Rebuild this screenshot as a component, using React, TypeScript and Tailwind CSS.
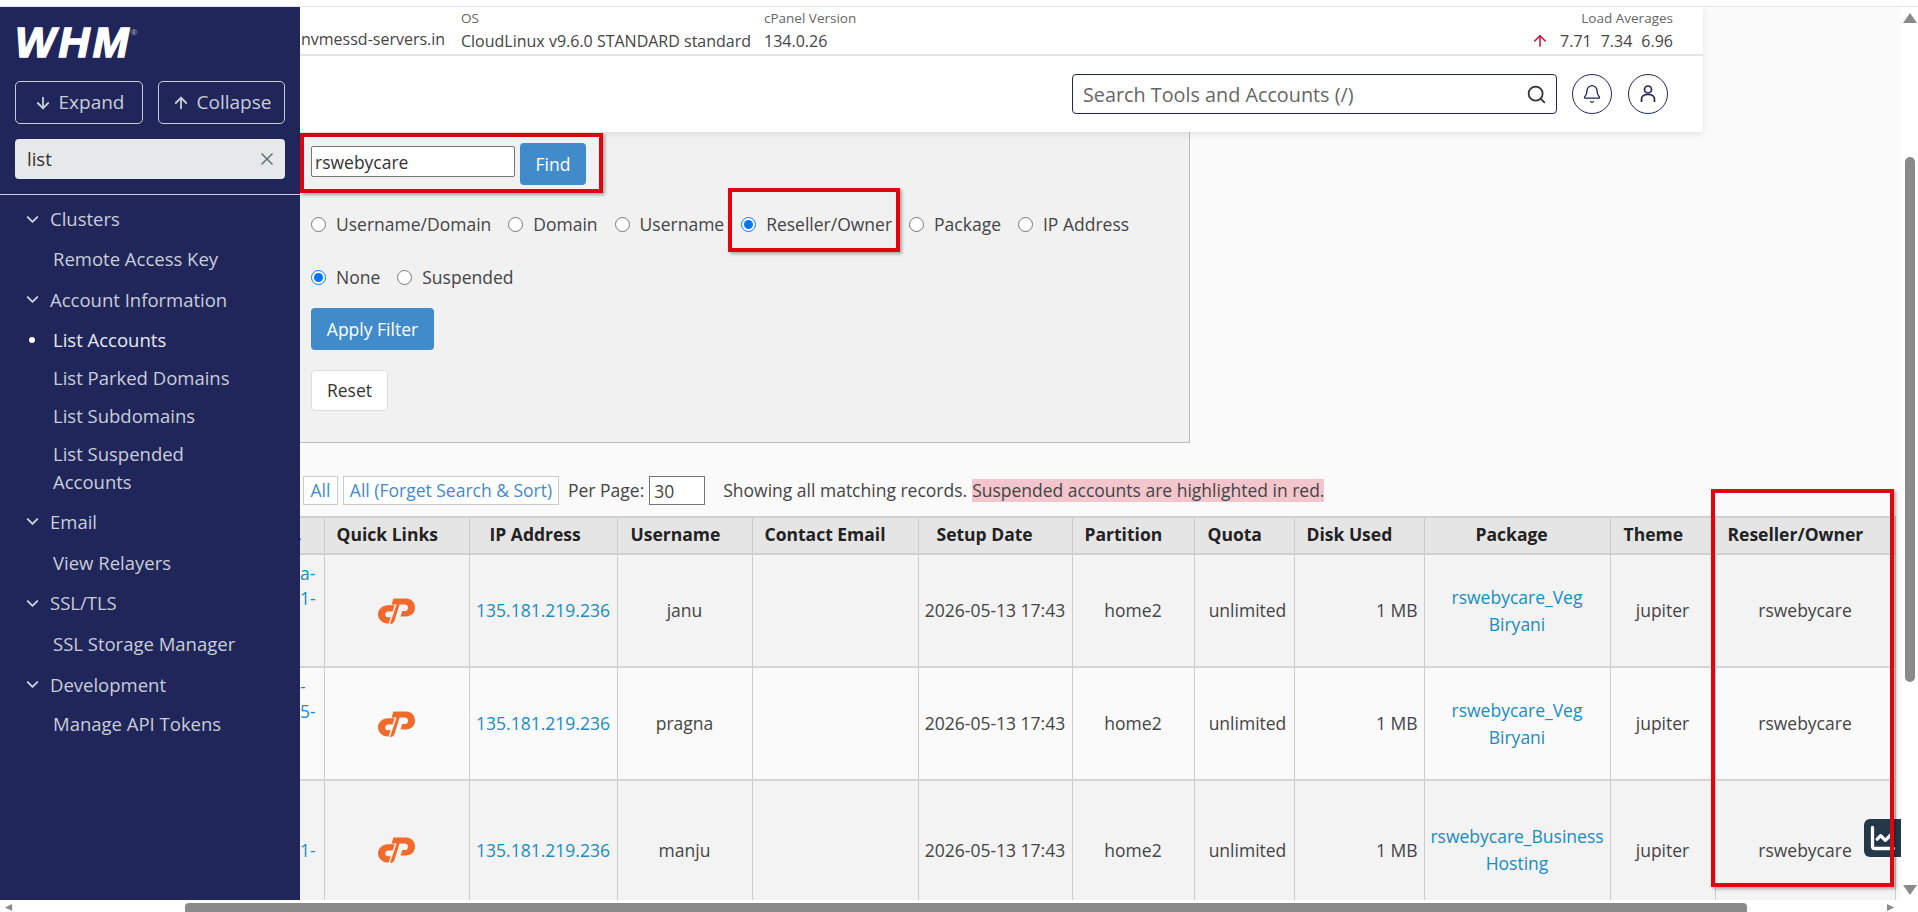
import { ArrowDown, ArrowUp, Bell, ChartLine, ChevronDown, Search, X } from "lucide-react";

/* ---------------- Data ---------------- */

const navItems = [
    { label: "Clusters", group: true, h: "h-[40px]" },
    { label: "Remote Access Key", h: "h-[40px]" },
    { label: "Account Information", group: true, h: "h-[41px]" },
    { label: "List Accounts", active: true, h: "h-[39px]" },
    { label: "List Parked Domains", h: "h-[38px]" },
    { label: "List Subdomains", h: "h-[38px]" },
    { label: "List Suspended Accounts", h: "h-[66px]" },
    { label: "Email", group: true, h: "h-[41px]" },
    { label: "View Relayers", h: "h-[41px]" },
    { label: "SSL/TLS", group: true, h: "h-[40px]" },
    { label: "SSL Storage Manager", h: "h-[41px]" },
    { label: "Development", group: true, h: "h-[41px]" },
    { label: "Manage API Tokens", h: "h-[38px]" },
];

const columnWidths = [24, 145, 148, 135, 166, 154, 122, 100, 130, 186, 105, 180];

const rows = [
    { lead: ["a-", "1-", "", ""], user: "janu", pkg: ["rswebycare_Veg", "Biryani"], rowH: "h-[113px]", bg: "bg-[#f3f3f3]" },
    { lead: ["-", "5-", "", ""], user: "pragna", pkg: ["rswebycare_Veg", "Biryani"], rowH: "h-[113px]", bg: "bg-[#fafafa]" },
    { lead: ["1-"], user: "manju", pkg: ["rswebycare_Business", "Hosting"], rowH: "h-[140px]", bg: "bg-[#f3f3f3]" },
];

const headers = [
    { label: "Quick Links", pad: "pl-[12px]" },
    { label: "IP Address", pad: "pl-[20px]" },
    { label: "Username", pad: "pl-[13px]" },
    { label: "Contact Email", pad: "pl-[12px]" },
    { label: "Setup Date", pad: "pl-[18px]" },
    { label: "Partition", pad: "pl-[12px]" },
    { label: "Quota", pad: "pl-[13px]" },
    { label: "Disk Used", pad: "pl-[12px]" },
    { label: "Package", pad: "pl-[51px]" },
    { label: "Theme", pad: "pl-[13px]" },
    { label: "Reseller/Owner", pad: "pl-[12px]" },
];

const radios = [
    { label: "Username/Domain", gap: "mr-[17px]" },
    { label: "Domain", gap: "mr-[17px]" },
    { label: "Username", gap: "mr-[17px]" },
    { label: "Reseller/Owner", checked: true, gap: "mr-[17px]" },
    { label: "Package", gap: "mr-[17px]" },
    { label: "IP Address", gap: "" },
];

/* ---------------- Small drawings ---------------- */

function CpanelLogo() {
    return (
        <svg viewBox="0 0 37 26" className="mx-auto h-[26px] w-[37px]" fill="#f26a2b">
            <path d="M16.6 7.2H10C4.3 7.2 0 11.2 0 16.3C0 21.3 4.2 25.4 9.6 25.4H10.6L12.8 19.2H10.2C8.4 19.2 7.2 18 7.2 16.4C7.2 14.8 8.4 13.4 10.3 13.4H14.6Z" />
            <path d="M15.5 0.5H28C33.5 0.5 37 4.5 37 9.5C37 14.8 33 18.5 28 18.5H22.5L24.3 13H27.5C29 13 30 11.4 30 9.8C30 8 28.8 6.5 27 6.5H21.6L16.6 22.5C16 24.8 14.6 26 12.4 26H12L18.6 6.5H13.5Z" />
        </svg>
    );
}

function Triangle({ points, className }: { points: string; className: string }) {
    return (
        <svg viewBox="0 0 14 10" className={className} fill="#8a8a8a">
            <polygon points={points} />
        </svg>
    );
}

function Radio({ label, checked, gap }: { label: string; checked?: boolean; gap: string }) {
    return (
        <label className={`flex items-center gap-[10px] ${gap}`}>
            <input type="radio" checked={!!checked} readOnly className="h-[15px] w-[15px] accent-[#0075ff]" />
            <span className="whitespace-nowrap">{label}</span>
        </label>
    );
}

/* ---------------- Sidebar ---------------- */

function Sidebar() {
    return (
        <aside className="flex w-[300px] shrink-0 flex-col bg-[#20265a] text-[18.5px] text-[#c9cdd9]">
            <div className="flex h-[74px] items-start pl-[15px] pt-[14px]">
                <span className="text-[43px] font-bold italic leading-[43px] tracking-[3px] text-white [-webkit-text-stroke:1.5px_white] [font-family:'Liberation_Sans',sans-serif]">WHM</span>
                <span className="-ml-[1px] mt-[7px] text-[8px] leading-none text-[#aeb3c8]">®</span>
            </div>
            <div className="flex gap-[15px] px-[15px] text-[19px]">
                <button className="flex h-[43px] w-[128px] items-center justify-center gap-[7px] rounded-[5px] border border-[#c9cdd9]">
                    <ArrowDown size={18} strokeWidth={2.4} />
                    Expand
                </button>
                <button className="flex h-[43px] w-[127px] items-center justify-center gap-[7px] rounded-[5px] border border-[#c9cdd9]">
                    <ArrowUp size={18} strokeWidth={2.4} />
                    Collapse
                </button>
            </div>
            <div className="mx-[15px] mt-[15px] flex h-[40px] items-center justify-between rounded-[4px] bg-[#e6e8ea] pl-[12px] pr-[8px] text-[#333]">
                list
                <X size={20} className="text-[#6b7280]" />
            </div>
            <div className="mt-[15px] border-t border-[#c9cdd9]" />
            <nav className="mt-[4px]">
                {navItems.map((item) => (
                    <div key={item.label} className={`flex items-center ${item.h} ${item.group ? "pl-[23px]" : "pl-[53px]"} ${item.active ? "relative text-[#e8eaf0]" : ""}`}>
                        {item.group && <ChevronDown size={19} strokeWidth={2.6} className="mr-[8px]" />}
                        {item.active && <span className="absolute left-[29px] h-[6px] w-[6px] rounded-full bg-white" />}
                        <span className={item.label === "List Suspended Accounts" ? "w-[180px] leading-[28px]" : ""}>{item.label}</span>
                    </div>
                ))}
            </nav>
        </aside>
    );
}

/* ---------------- Header ---------------- */

function TopHeader() {
    return (
        <header className="relative z-10 h-[125px] w-[1403px] bg-white shadow-[0_2px_6px_rgba(0,0,0,0.1)]">
            <div className="flex h-[49px] border-b-2 border-[#e5e5e5] text-[#444]">
                <div className="flex w-[161px] flex-col justify-end pb-[3px] pl-[1px]">nvmessd-servers.in</div>
                <div className="w-[303px]">
                    <div className="h-[22px] pt-[1px] text-[13.5px] text-[#666]">OS</div>
                    <div className="whitespace-nowrap">CloudLinux v9.6.0 STANDARD standard</div>
                </div>
                <div className="w-[200px]">
                    <div className="h-[22px] pt-[1px] text-[13.5px] text-[#666]">cPanel Version</div>
                    <div>134.0.26</div>
                </div>
                <div className="ml-auto pr-[30px] text-right">
                    <div className="h-[22px] pt-[1px] text-[13.5px] text-[#666]">Load Averages</div>
                    <div className="flex items-center justify-end gap-[9px]">
                        <ArrowUp size={18} className="mr-[2px] text-[#c8102e]" />
                        <span>7.71</span>
                        <span>7.34</span>
                        <span>6.96</span>
                    </div>
                </div>
            </div>
            <div className="flex justify-end gap-[15px] pr-[35px] pt-[18px]">
                <div className="flex h-[40px] w-[485px] items-center justify-between rounded-[4px] border border-[#20265a] pb-[0px] pl-[10px] pr-[9px] pt-[1px] text-[19.8px] text-[#666]">
                    Search Tools and Accounts (/)
                    <Search size={21} className="text-[#333]" />
                </div>
                <div className="flex h-[40px] w-[40px] items-center justify-center rounded-full border border-[#20265a] text-[#20265a]">
                    <Bell size={20} strokeWidth={1.6} />
                </div>
                <div className="ml-[1px] flex h-[40px] w-[40px] items-center justify-center rounded-full border border-[#20265a] text-[#20265a]">
                    <svg viewBox="0 0 20 20" className="h-[20px] w-[20px]" fill="none" stroke="currentColor" strokeWidth="1.7">
                        <circle cx="10" cy="5.5" r="3.5" />
                        <path d="M3.5 18V15.5C3.5 12.5 6 10.5 10 10.5C14 10.5 16.5 12.5 16.5 15.5V18" />
                    </svg>
                </div>
            </div>
        </header>
    );
}

/* ---------------- Filter panel ---------------- */

function FilterPanel() {
    return (
        <section className="h-[311px] w-[890px] border-b border-r border-[#bbb] bg-[#f1f1f1] pl-[11px] pt-[11px] text-[17.5px] text-[#444]">
            <div className="flex gap-[5px]">
                <input readOnly value="rswebycare" className="mt-[3px] h-[31px] w-[204px] rounded-[2px] border border-[#767676] bg-white pl-[3px] text-[#333]" />
                <button className="h-[42px] w-[66px] rounded-[4px] bg-[#428bca] text-white">Find</button>
            </div>
            <div className="mt-[27px] flex h-[24px] items-center">
                {radios.map((r) => (
                    <Radio key={r.label} {...r} />
                ))}
            </div>
            <div className="mt-[29px] flex h-[24px] items-center">
                <Radio label="None" checked gap="mr-[17px]" />
                <Radio label="Suspended" gap="" />
            </div>
            <button className="mt-[19px] block h-[42px] w-[123px] rounded-[4px] bg-[#428bca] text-white">Apply Filter</button>
            <button className="mt-[20px] block h-[41px] w-[77px] rounded-[4px] border border-[#ddd] bg-white text-[#333]">Reset</button>
        </section>
    );
}

/* ---------------- Accounts table ---------------- */

function AccountsTable() {
    return (
        <table className="w-[1595px] table-fixed border-collapse text-[17.5px] text-[#444]">
            <colgroup>
                {columnWidths.map((w, i) => (
                    <col key={i} style={{ width: w }} />
                ))}
            </colgroup>
            <thead>
                <tr className="h-[37px] border-y-2 border-[#d0d0d0] bg-[#e5e5e5] font-bold text-[#222]">
                    <th className="overflow-hidden border-r border-[#ccc] text-left">
                        <span className="-ml-[7px] block text-[10px] leading-none text-[#222]">▲</span>
                    </th>
                    {headers.map((h) => (
                        <th key={h.label} className={`whitespace-nowrap border-x border-[#ccc] pb-[2px] text-left font-bold ${h.pad}`}>{h.label}</th>
                    ))}
                </tr>
            </thead>
            <tbody>
                {rows.map((row) => (
                    <tr key={row.user} className={`${row.rowH} ${row.bg} border-b-2 border-[#d5d5d5] text-center`}>
                        <td className="overflow-hidden border-r border-[#ccc] text-left leading-[25px] text-[#1a8cbf]">
                            {row.lead.map((line, i) => (
                                <div key={i} className="whitespace-nowrap">{line || "\u00a0"}</div>
                            ))}
                        </td>
                        <td className="border-x border-[#ccc]"><CpanelLogo /></td>
                        <td className="border-x border-[#ccc] text-[#1a8cbf]">135.181.219.236</td>
                        <td className="border-x border-[#ccc]">{row.user}</td>
                        <td className="border-x border-[#ccc]" />
                        <td className="whitespace-nowrap border-x border-[#ccc]">2026-05-13 17:43</td>
                        <td className="border-x border-[#ccc]">home2</td>
                        <td className="border-x border-[#ccc] pl-[7px]">unlimited</td>
                        <td className="border-x border-[#ccc] pr-[6px] text-right">1 MB</td>
                        <td className="border-x border-[#ccc] leading-[27px] text-[#1a8cbf]">
                            <div>{row.pkg[0]}</div>
                            <div>{row.pkg[1]}</div>
                        </td>
                        <td className="border-x border-[#ccc]">jupiter</td>
                        <td className="border-x border-[#ccc]">rswebycare</td>
                    </tr>
                ))}
            </tbody>
        </table>
    );
}

/* ---------------- Page ---------------- */

export default function App() {
    return (
        <div className="relative flex h-screen w-full flex-col overflow-hidden bg-white text-[16px] [font-family:'Open_Sans',sans-serif]">
            <div className="h-[7px] border-b border-[#e5e5e5]" />

            <div className="flex h-[893px]">
                <Sidebar />

                <main className="w-[1601px] overflow-hidden bg-[#fafafa]">
                    <TopHeader />
                    <FilterPanel />
                    <div className="flex h-[40px] items-start pl-[3px] pt-[33px] text-[17.5px] text-[#444] [box-sizing:content-box]">
                        <a className="flex h-[29px] w-[35px] items-center justify-center border border-[#ccc] bg-white text-[#428bca]">All</a>
                        <a className="ml-[5px] flex h-[29px] w-[216px] items-center justify-center whitespace-nowrap border border-[#ccc] bg-white text-[#428bca]">All (Forget Search &amp; Sort)</a>
                        <span className="ml-[9px] flex h-[29px] items-center whitespace-nowrap">Per Page:</span>
                        <input readOnly value="30" className="ml-[5px] h-[29px] w-[56px] border border-[#767676] bg-white pl-[4px]" />
                        <span className="ml-[18px] flex h-[29px] items-center whitespace-nowrap">Showing all matching records.</span>
                        <span className="ml-[5px] flex h-[23px] translate-y-[3px] items-center whitespace-nowrap bg-[#f2c6cc]">Suspended accounts are highlighted in red.</span>
                    </div>
                    <AccountsTable />
                </main>

                {/* vertical scrollbar */}
                <div className="flex w-[17px] flex-col items-center bg-white pt-[6px]">
                    <Triangle points="7,0 14,10 0,10" className="h-[10px] w-[14px]" />
                    <div className="mt-[134px] h-[525px] w-[10px] rounded-full bg-[#8a8a8a]" />
                    <Triangle points="0,0 14,0 7,10" className="mt-[203px] h-[10px] w-[14px]" />
                </div>
            </div>

            {/* horizontal scrollbar */}
            <div className="flex h-[12px] items-end bg-white pl-[5px]">
                <Triangle points="10,0 10,10 0,5" className="h-[9px] w-[10px]" />
                <div className="ml-[170px] h-[9px] w-[1562px] rounded-t-[4px] bg-[#8a8a8a]" />
                <Triangle points="0,0 10,5 0,10" className="ml-[140px] h-[9px] w-[10px]" />
            </div>

            {/* floating chart button */}
            <div className="absolute left-[1864px] top-[819px] flex h-[38px] w-[37px] items-center justify-center rounded-l-[6px] bg-[#25384a] text-white">
                <ChartLine size={28} strokeWidth={2.8} />
            </div>

            {/* annotation boxes */}
            <div className="absolute left-[300px] top-[133px] h-[60px] w-[303px] border-[4px] border-[#e0060f] shadow-[2px_2px_3px_rgba(0,0,0,0.3)]" />
            <div className="absolute left-[728px] top-[188px] h-[64px] w-[172px] border-[4px] border-[#e0060f] shadow-[2px_2px_3px_rgba(0,0,0,0.3)]" />
            <div className="absolute left-[1711px] top-[489px] h-[398px] w-[183px] border-[4px] border-[#e0060f] shadow-[2px_2px_3px_rgba(0,0,0,0.3)]" />
        </div>
    );
}
